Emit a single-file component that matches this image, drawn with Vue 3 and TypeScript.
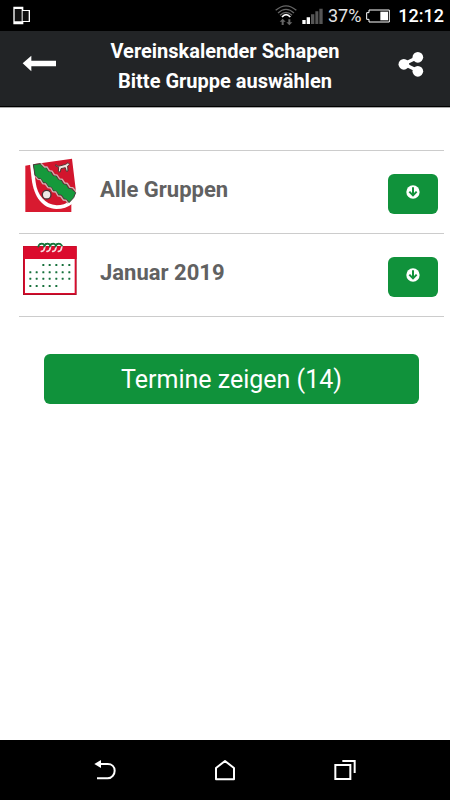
<script setup lang="ts">
interface FilterRow {
  id: string
  label: string
  icon: 'crest' | 'calendar'
}

const filters: FilterRow[] = [
  { id: 'group', label: 'Alle Gruppen', icon: 'crest' },
  { id: 'month', label: 'Januar 2019', icon: 'calendar' },
]

const eventCount = 14

// Day dots of the calendar icon: the first week starts late, the last ends early.
const dayDots: { x: number; y: number }[] = [105, 127, 146, 168].flatMap((y, row) =>
  [61, 80, 100, 119, 139, 158, 178]
    .filter((_, col) => !(row === 0 && col < 2) && !(row === 3 && col > 4))
    .map((x) => ({ x, y })),
)
</script>

<template>
  <div class="screen">
    <div class="status">
      <svg class="devices" viewBox="0 0 51 57" aria-hidden="true">
        <path d="M1 2h30v10h20v36H31v7H1z" fill="#fff" />
        <path d="M5 9h21v37H5zM29 15h18v30H29z" fill="#111" />
      </svg>
      <div class="indicators">
        <svg class="wifi" viewBox="0 0 66 63" fill="none" aria-hidden="true">
          <g stroke="#666" stroke-width="4">
            <path d="M2 16Q33-11 64 16" />
            <path d="M9 24Q33 2 57 24" />
            <path d="M15 31Q33 13 51 31" />
          </g>
          <path d="M21 36Q33 22 46 36" stroke="#fff" stroke-width="5" />
          <path d="M23 41l-9 9h6v10h6V50h6zM43 61l-9-9h6V43h6v9h6z" fill="#666" />
        </svg>
        <svg class="signal" viewBox="0 0 63 48" aria-hidden="true">
          <path d="M1 36h10v12H1zM14 28h10v20H14z" fill="#fff" />
          <path d="M27 19h10v29H27zM40 10h9v38h-9zM52 2h10v46H52z" fill="#555" />
        </svg>
        <span class="percent">37%</span>
        <svg class="battery" viewBox="0 0 72 40" aria-hidden="true">
          <path d="M9 2h61v36H9v-8H2V10h7z" fill="none" stroke="#fff" stroke-width="3" />
          <path d="M43 7h23v26H43z" fill="#fff" />
        </svg>
        <span class="clock">12:12</span>
      </div>
    </div>

    <header class="header">
      <button class="icon-button" type="button" aria-label="Zurück">
        <svg class="arrow" viewBox="0 0 105 51" aria-hidden="true">
          <path d="M2 25L28 2v15h74v17H28v15z" fill="#fff" />
        </svg>
      </button>
      <h1 class="title">Vereinskalender Schapen<br />Bitte Gruppe auswählen</h1>
      <button class="icon-button" type="button" aria-label="Teilen">
        <svg class="share" viewBox="0 0 80 78" aria-hidden="true">
          <path d="M62 19L20 39l42 20" fill="none" stroke="#fff" stroke-width="10" />
          <g fill="#fff">
            <circle cx="62" cy="19" r="16" />
            <circle cx="20" cy="40" r="16" />
            <circle cx="62" cy="61" r="16" />
          </g>
        </svg>
      </button>
    </header>

    <main class="content">
      <ul class="filters">
        <li v-for="row in filters" :key="row.id" class="filter">
          <svg v-if="row.icon === 'crest'" class="crest" viewBox="36 30 168 180" aria-hidden="true">
            <path d="M46 62L70 58 184 150V201H46z" fill="#d81a30" />
            <path
              d="M60 57L65 102C71 155 98 191 139 192C158 192 174 186 187 176L202 137L189 35 150 40z"
              fill="#fff"
            />
            <path
              d="M70 58L186 41 197 132C197 161 170 181 140 181C105 179 82 151 77 112z"
              fill="#d2152d"
            />
            <path
              d="M70 59L91 56 102 68 109 67 115 79 123 80 130 92 138 92 146 104 154 105 161 117 169 118 176 130 184 131 197 143 191 158 177 173 169 163 162 162 154 150 146 150 139 139 130 138 124 127 116 126 108 114 100 113 93 102 85 100 75 91z"
              fill="#15993b"
              stroke="#473d3c"
              stroke-width="3"
            />
            <path
              d="M93 55L104 66 111 66 118 77 126 78 133 89 141 90 149 102 157 103 164 114 172 115 180 127 188 128 197 138M76 94L84 103 91 104 98 116 106 117 114 128 122 129 128 140 137 141 144 153 152 154 160 165 168 166 174 175"
              fill="none"
              stroke="#c9b5b2"
              stroke-width="4"
            />
            <path
              d="M137 59l8 5 22-6 7-5 5 5-6 5 1 15-5 1-3-11-13 3-2 10-6-1 1-13-9-4z"
              fill="#eee4df"
              stroke="#553332"
              stroke-width="3"
            />
            <circle cx="110" cy="149" r="13" fill="#eee8e5" stroke="#493536" stroke-width="4" />
          </svg>
          <svg v-else class="calendar" viewBox="36 36 168 162" aria-hidden="true">
            <path d="M41 50h157v143H41z" fill="#fff" stroke="#a51226" stroke-width="4" />
            <path d="M43 82v109h153V82" fill="none" stroke="#db0b2d" stroke-width="4" />
            <path d="M40 49h160v38H40z" fill="#db0b2d" />
            <g fill="none" stroke-width="5" stroke-linecap="round">
              <g v-for="x in [0, 17, 34, 51]" :key="x">
                <path :d="`M${85 + x} 50Q${86 + x} 41 ${96 + x} 42`" stroke="#14753a" />
                <path
                  :d="`M${96 + x} 42Q${107 + x} 43 ${104 + x} 53Q${102 + x} 65 ${94 + x} 64`"
                  stroke="#f8dce0"
                />
                <path :d="`M${90 + x} 42Q${99 + x} 38 ${105 + x} 47`" stroke="#14753a" />
              </g>
            </g>
            <g fill="#17713c">
              <rect
                v-for="dot in dayDots"
                :key="`${dot.x}-${dot.y}`"
                :x="dot.x - 3"
                :y="dot.y - 3"
                width="6"
                height="6"
                rx="1"
              />
            </g>
          </svg>
          <span class="label">{{ row.label }}</span>
          <button class="pick" type="button" :aria-label="`${row.label} ändern`">
            <svg viewBox="0 0 42 42" aria-hidden="true">
              <circle cx="21" cy="21" r="20" fill="#fff" />
              <path
                d="M21 7v23M10 20l11 11 11-11"
                fill="none"
                stroke="#10923b"
                stroke-width="6"
              />
            </svg>
          </button>
        </li>
      </ul>
      <button class="submit" type="button">Termine zeigen ({{ eventCount }})</button>
    </main>

    <nav class="nav">
      <button type="button" aria-label="Zurück">
        <svg viewBox="0 0 66 66" aria-hidden="true">
          <path d="M13 15h28c13 0 21 9 21 20S54 58 41 58H9" fill="none" stroke="#fff" stroke-width="6" />
          <path d="M1 15L21 3v24z" fill="#fff" />
        </svg>
      </button>
      <button type="button" aria-label="Startseite">
        <svg viewBox="0 0 66 66" aria-hidden="true">
          <path d="M6 61V27L33 6l27 21v34z" fill="none" stroke="#fff" stroke-width="6" stroke-linejoin="round" />
        </svg>
      </button>
      <button type="button" aria-label="Letzte Apps">
        <svg viewBox="0 0 66 66" aria-hidden="true">
          <path d="M4 18h45v42H4zM25 6h37v36" fill="none" stroke="#fff" stroke-width="6" />
        </svg>
      </button>
    </nav>
  </div>
</template>

<style>
body {
  margin: 0;
  background: #fff;
}
</style>

<style scoped>
.screen {
  display: flex;
  flex-direction: column;
  min-height: 100vh;
  background: #fff;
  font-family: Roboto, "Liberation Sans", sans-serif;
}

button {
  display: flex;
  align-items: center;
  justify-content: center;
  margin: 0;
  padding: 0;
  border: 0;
  background: none;
  font: inherit;
  cursor: pointer;
}

svg {
  display: block;
  flex: none;
}

.status {
  display: flex;
  align-items: center;
  justify-content: space-between;
  height: 31px;
  padding: 0 6px 0 13px;
  background: #000;
  color: #fff;
  font-size: 18px;
  line-height: 32px;
}

.devices {
  width: 17px;
  height: 19px;
}

.indicators {
  display: flex;
  align-items: center;
  gap: 5px;
}

.wifi {
  width: 22px;
  height: 21px;
}

.signal {
  width: 21px;
  height: 16px;
}

.battery {
  width: 24px;
  height: 14px;
}

.percent {
  color: #e4e4e4;
}

.clock {
  margin-left: 3px;
  font-weight: 500;
}

.header {
  display: flex;
  align-items: center;
  justify-content: space-between;
  box-sizing: border-box;
  height: 76px;
  padding: 0 22px;
  border-bottom: 1px solid #000;
  box-shadow: 0 1px #aaa;
  background: #222426;
  color: #fff;
}

.icon-button {
  width: 35px;
  height: 44px;
  margin-bottom: 10px;
}

.arrow {
  width: 35px;
  height: 17px;
}

.share {
  width: 27px;
  height: 26px;
}

.title {
  margin: 0 0 6px;
  font-size: 20px;
  font-weight: 700;
  line-height: 30px;
  text-align: center;
}

.content {
  flex: 1;
  padding: 43px 6px 24px 19px;
}

.filters {
  margin: 0;
  padding: 0;
  border-top: 1px solid #ccc;
  list-style: none;
}

.filter {
  display: flex;
  align-items: flex-start;
  box-sizing: border-box;
  height: 83px;
  padding: 4px 6px 0 3px;
  border-bottom: 1px solid #ccc;
}

.crest {
  width: 56px;
  height: 60px;
}

.calendar {
  width: 56px;
  height: 54px;
  margin-top: 4px;
}

.label {
  flex: 1;
  margin-left: 22px;
  color: #616161;
  font-size: 22px;
  font-weight: 700;
  line-height: 70px;
}

.pick {
  width: 50px;
  height: 40px;
  margin-top: 19px;
  padding-bottom: 4px;
  border-radius: 6px;
  background: #10923b;
}

.pick svg {
  width: 14px;
  height: 14px;
}

.submit {
  width: calc(100% - 50px);
  height: 50px;
  margin: 37px 25px 0;
  border-radius: 6px;
  background: #10923b;
  color: #fff;
  font-size: 25px;
}

.nav {
  display: flex;
  align-items: center;
  justify-content: center;
  gap: 60px;
  height: 60px;
  background: #000;
}

.nav button {
  width: 60px;
  height: 60px;
}

.nav svg {
  width: 22px;
  height: 22px;
}
</style>
